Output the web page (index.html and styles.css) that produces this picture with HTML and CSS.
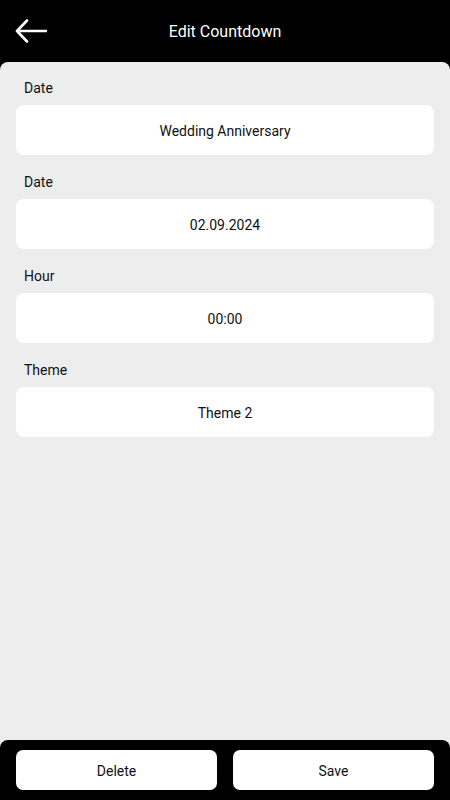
FILE: index.html
```html
<!DOCTYPE html>
<html>
<head>
<meta charset="utf-8">
<link rel="stylesheet" href="styles.css">
</head>
<body>
<div class="app">
  <header class="topbar">
    <svg class="back" width="32" height="26" viewBox="0 0 32 26">
      <path d="M2 13 H31 M12 2.5 L2 13 L12 23.5" fill="none" stroke="#fff" stroke-width="2.6" stroke-linecap="round" stroke-linejoin="round"/>
    </svg>
    <h1 class="title">Edit Countdown</h1>
  </header>
  <main class="panel">
    <div class="form">
      <div class="field">
        <div class="label">Date</div>
        <div class="box">Wedding Anniversary</div>
      </div>
      <div class="field">
        <div class="label">Date</div>
        <div class="box">02.09.2024</div>
      </div>
      <div class="field">
        <div class="label">Hour</div>
        <div class="box">00:00</div>
      </div>
      <div class="field">
        <div class="label">Theme</div>
        <div class="box">Theme 2</div>
      </div>
    </div>
    <footer class="footer">
      <button class="btn">Delete</button>
      <button class="btn">Save</button>
    </footer>
  </main>
</div>
</body>
</html>
```
FILE: styles.css
```css
* { box-sizing: border-box; }
html, body { margin: 0; padding: 0; }
body {
  background: #000;
  font-family: Roboto, "Noto Sans", sans-serif;
  color: #111;
}
.app {
  height: 800px;
  display: flex;
  flex-direction: column;
}
.topbar {
  height: 62px;
  position: relative;
  display: flex;
  align-items: center;
  justify-content: center;
  background: #000;
}
.back {
  position: absolute;
  left: 15px;
  top: 18px;
}
.title {
  margin: 0;
  font-size: 16px;
  font-weight: 400;
  color: #fff;
  line-height: 20px;
  margin-top: 2px;
}
.panel {
  flex: 1;
  background: #ededed;
  border-radius: 8px 8px 0 0;
  display: flex;
  flex-direction: column;
}
.form {
  flex: 1;
  padding: 16px 16px 0;
  display: flex;
  flex-direction: column;
  gap: 17px;
}
.label {
  font-size: 14px;
  line-height: 20px;
  padding-left: 8px;
  margin-bottom: 7px;
  color: #111;
}
.box {
  height: 50px;
  background: #fff;
  border-radius: 8px;
  display: flex;
  align-items: center;
  justify-content: center;
  padding-top: 2px;
  font-size: 14px;
  color: #111;
}
.footer {
  height: 60px;
  background: #000;
  border-radius: 8px 8px 0 0;
  padding: 10px 16px;
  display: flex;
  gap: 16px;
}
.btn {
  flex: 1;
  height: 40px;
  border: none;
  border-radius: 7px;
  background: #fff;
  font-family: Roboto, "Noto Sans", sans-serif;
  font-size: 14px;
  color: #111;
  padding: 2px 0 0;
}
```
